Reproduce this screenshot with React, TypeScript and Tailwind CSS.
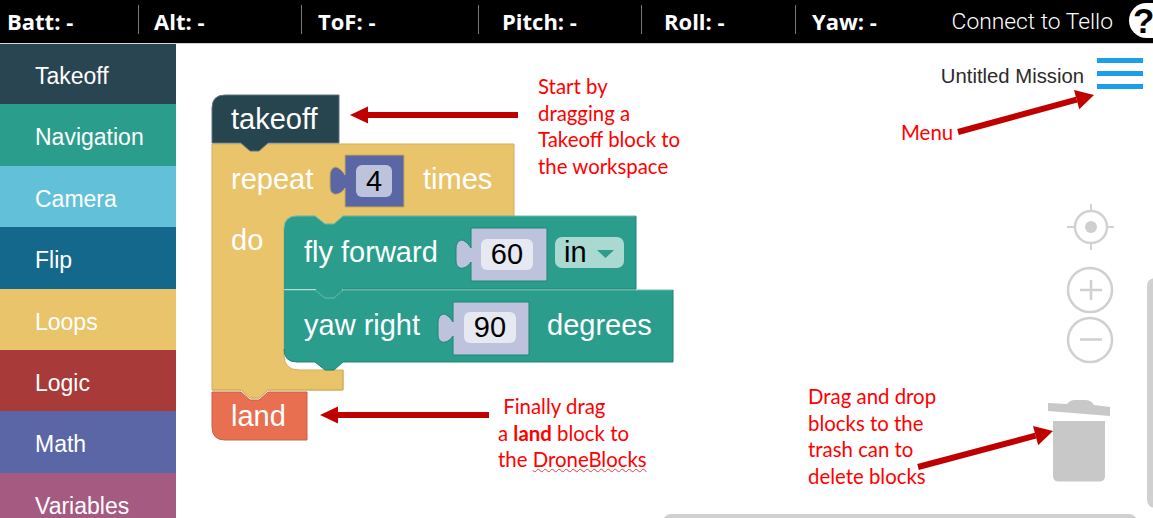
import React from "react";

const stats = [
  { label: "Batt: -", c: "w-[139px] pl-[7px]" },
  { label: "Alt: -", c: "w-[163px] pl-[15px]" },
  { label: "ToF: -", c: "w-[177px] pl-[16px]" },
  { label: "Pitch: -", c: "w-[163px] pl-[23px]" },
  { label: "Roll: -", c: "w-[154px] pl-[22px]" },
];

const categories = [
  { name: "Takeoff", c: "bg-[#2a4552]" },
  { name: "Navigation", c: "bg-[#2a9d8c]" },
  { name: "Camera", c: "bg-[#62c1d9]" },
  { name: "Flip", c: "bg-[#14688c]" },
  { name: "Loops", c: "bg-[#e9c46a]" },
  { name: "Logic", c: "bg-[#a83a3a]" },
  { name: "Math", c: "bg-[#5b66a6]" },
  { name: "Variables", c: "bg-[#a55a82]" },
];

const blockText = "font-['Liberation_Sans'] text-[29px] fill-white";
const fieldText = "font-['Liberation_Sans'] text-[29px] fill-black";

function Arrow({ x1, y1, x2, y2, w = 6, head = 18, hw = 17 }: { x1: number; y1: number; x2: number; y2: number; w?: number; head?: number; hw?: number }) {
  const a = Math.atan2(y2 - y1, x2 - x1);
  const ux = Math.cos(a);
  const uy = Math.sin(a);
  const bx = x2 - ux * head;
  const by = y2 - uy * head;
  return (
    <g fill="#c00000">
      <polygon points={`${x1 - (uy * w) / 2},${y1 + (ux * w) / 2} ${bx - (uy * w) / 2},${by + (ux * w) / 2} ${bx + (uy * w) / 2},${by - (ux * w) / 2} ${x1 + (uy * w) / 2},${y1 - (ux * w) / 2}`} />
      <polygon points={`${x2},${y2} ${bx - (uy * hw) / 2},${by + (ux * hw) / 2} ${bx + (uy * hw) / 2},${by - (ux * hw) / 2}`} />
    </g>
  );
}

function Socket({ x, y, r, b, fill, stroke }: { x: number; y: number; r: number; b: number; fill: string; stroke: string }) {
  return (
    <path
      d={`M${x} ${y} H${r} V${b} H${x} V${b - 19} C${x - 3} ${b - 14} ${x - 8} ${b - 12} ${x - 11} ${b - 13} C${x - 14} ${b - 14} ${x - 15} ${b - 17} ${x - 15} ${b - 20} V${y + 20} C${x - 15} ${y + 16} ${x - 13} ${y + 13} ${x - 10} ${y + 12} C${x - 7} ${y + 12} ${x - 3} ${y + 15} ${x} ${y + 20} Z`}
      fill={fill}
      stroke={stroke}
      strokeWidth="1"
    />
  );
}

function Blocks() {
  return (
    <svg className="absolute inset-0 w-[977px] h-[475px]" viewBox="176 43 977 475">
      {/* repeat C */}
      <path
        d="M212 144 H514 V216 H343 L334 224 H325 L315 216 H297 Q284 216 284 229 V355 Q284 370 299 370 H343 V390 H268 L259 398 H250 L241 390 H212 Z"
        fill="#e9c46a"
        stroke="#d2ad5c"
        strokeWidth="1"
      />
      {/* takeoff */}
      <path d="M212 143 V108 Q212 95 225 95 H339 V143 H268 L259 151 H250 L241 143 Z" fill="#27454f" stroke="#5d7580" strokeWidth="1" />
      {/* land */}
      <path d="M212 392 H241 L250 400 H259 L268 392 H307 V440 H225 Q212 440 212 427 Z" fill="#e86f50" stroke="#c9614a" strokeWidth="1" />
      <path d="M212 390 H241 L250 398 H259 L268 390 H343 V370" fill="none" stroke="#d2ad5c" strokeWidth="1" />
      {/* yaw right */}
      <path d="M284 290 H673 V362 H343 L334 370 H325 L315 362 H297 Q284 362 284 349 Z" fill="#2a9d8c" />
      <path d="M284 290 H315 L325 298 H334 L343 290 H673" fill="none" stroke="#6dbcae" strokeWidth="1" />
      <path d="M673 290 V362 H343 L334 370 H325 L315 362 H297 Q284 362 284 349" fill="none" stroke="#1f8375" strokeWidth="1" />
      {/* fly forward */}
      <path d="M284 229 Q284 216 297 216 H315 L325 224 H334 L343 216 H636 V289 H343 L334 297 H325 L315 289 H284 Z" fill="#2a9d8c" />
      <path d="M284 229 Q284 216 297 216 H315 L325 224 H334 L343 216 H636" fill="none" stroke="#6dbcae" strokeWidth="1" />
      <path d="M636 216 V289 H343" fill="none" stroke="#1f8375" strokeWidth="1" />

      <Socket x={345} y={155} r={404} b={207} fill="#5b67a5" stroke="#c9a957" />
      <rect x="356" y="165" width="36" height="32" rx="6" fill="#bec3dd" />
      <Socket x={471} y={228} r={547} b={281} fill="#bec3dd" stroke="#1f8375" />
      <rect x="481" y="239" width="52" height="31" rx="6" fill="#e6e8f2" />
      <rect x="555" y="237" width="69" height="31" rx="7" fill="#aad9d1" />
      <polygon points="597,250 614,250 605.5,258" fill="#2a9d8c" />
      <Socket x={453} y={302} r={529} b={355} fill="#bec3dd" stroke="#1f8375" />
      <rect x="464" y="312" width="52" height="31" rx="6" fill="#e6e8f2" />

      <text x="231" y="129" className={blockText}>takeoff</text>
      <text x="231" y="189" className={blockText}>repeat</text>
      <text x="374" y="191" textAnchor="middle" className={fieldText}>4</text>
      <text x="423" y="189" className={blockText}>times</text>
      <text x="231" y="250" className={blockText}>do</text>
      <text x="304" y="262" className={blockText}>fly forward</text>
      <text x="507" y="264" textAnchor="middle" className={fieldText}>60</text>
      <text x="564" y="262" className={fieldText}>in</text>
      <text x="304" y="335" className={blockText}>yaw right</text>
      <text x="490" y="337" textAnchor="middle" className={fieldText}>90</text>
      <text x="547" y="335" className={blockText}>degrees</text>
      <text x="231" y="426" className={blockText}>land</text>

      <Arrow x1={518} y1={115} x2={350} y2={115} />
      <Arrow x1={489} y1={415} x2={320} y2={415} />
      <Arrow x1={958} y1={132} x2={1094} y2={95} w={6} head={18} hw={20} />
      <Arrow x1={918} y1={467} x2={1053} y2={431} w={6} head={18} hw={20} />

      {/* target */}
      <g fill="none" stroke="#d2d2d2">
        <circle cx="1091" cy="227" r="16" strokeWidth="2.5" />
        <path d="M1091 204 V211 M1091 243 V250 M1067 227 H1075 M1107 227 H1114" strokeWidth="2" />
      </g>
      <circle cx="1091" cy="227" r="6" fill="#cfcfcf" />
      {/* zoom */}
      <g fill="none" stroke="#d0d0d0" strokeWidth="2.5">
        <circle cx="1090" cy="290" r="22" />
        <path d="M1080 290 H1102 M1091 280 V300" />
        <circle cx="1090" cy="340" r="22" />
        <path d="M1080 339.5 H1102" />
      </g>
      {/* trash */}
      <path d="M1053 421 H1105 V476 Q1105 481.500 1099 481.500 H1059 Q1053 481.500 1053 476 Z" fill="#c8c8c8" />
      <path d="M1048 403 L1067 404 Q1070 400 1075 400 H1085 Q1091 400 1094 405 L1110 407 V416 L1048 411 Z" fill="#c8c8c8" />
    </svg>
  );
}

const note = "absolute font-['Lato'] text-[#ff0000] text-[20.4px] leading-[26.7px] whitespace-nowrap";
const stat = "font-['Open_Sans'] font-bold text-[22px] leading-none pt-[3px]";

export default function App() {
  return (
    <div className="w-[1153px] h-[518px] overflow-hidden flex flex-col bg-white font-['Liberation_Sans']">
      <header className="h-[43px] shrink-0 bg-black shadow-[0_1px_0_#d4d4d4] z-10 flex items-start pt-[5px] text-white relative">
        {stats.map((s) => (
          <div key={s.label} className={`${s.c} h-[29px] flex items-center border-r border-[#777] shrink-0`}>
            <span className={stat}>{s.label}</span>
          </div>
        ))}
        <div className="flex-1 flex items-center justify-between h-[29px]">
          <span className={`${stat} pl-[16px]`}>Yaw: -</span>
          <span className="font-['Roboto'] font-light text-[22.8px] leading-none pr-[40px] pt-[5px]">Connect to Tello</span>
        </div>
        <div className="absolute left-[1129px] top-[3px] w-[42px] h-[35px] rounded-full bg-white flex items-center pl-[4px] text-black font-bold text-[35px] leading-none">
          ?
        </div>
      </header>
      <div className="flex flex-1 min-h-0">
        <aside className="w-[176px] shrink-0 flex flex-col">
          {categories.map((c) => (
            <div key={c.name} className={`${c.c} h-[61.4px] shrink-0 flex items-center pl-[35px] pt-[5px] text-[23px] text-white`}>
              {c.name}
            </div>
          ))}
        </aside>
        <main className="relative flex-1 min-w-0">
          <Blocks />
          <div className="absolute right-[69px] top-[20px] text-[20.3px] leading-[26px] text-[#2b2b2b]">Untitled Mission</div>
          <div className="absolute left-[921px] top-[15px] w-[46px] flex flex-col gap-[8px]">
            <div className="h-[5px] bg-[#1aa0e8]" />
            <div className="h-[5px] bg-[#1aa0e8]" />
            <div className="h-[5px] bg-[#1aa0e8]" />
          </div>
          <div className={`${note} left-[362px] top-[30px]`}>
            Start by<br />dragging a<br />Takeoff block to<br />the workspace
          </div>
          <div className={`${note} left-[725px] top-[76px]`}>Menu</div>
          <div className={`${note} left-[322px] top-[350px]`}>
            <span>&nbsp;Finally drag</span><br />a <b>land</b> block to<br />the <span className="underline decoration-wavy decoration-[#e04040] decoration-1">DroneBlocks</span>
          </div>
          <div className={`${note} left-[632px] top-[340px]`}>
            Drag and drop<br />blocks to the<br />trash can to<br />delete blocks
          </div>
          <div className="absolute left-[971px] top-[235px] w-[20px] h-[230px] bg-[#d0d0d0] rounded-tl-[8px] rounded-bl-[8px]" />
          <div className="absolute left-[487px] top-[471px] w-[474px] h-[10px] bg-[#d0d0d0] rounded-t-[8px]" />
        </main>
      </div>
    </div>
  );
}
